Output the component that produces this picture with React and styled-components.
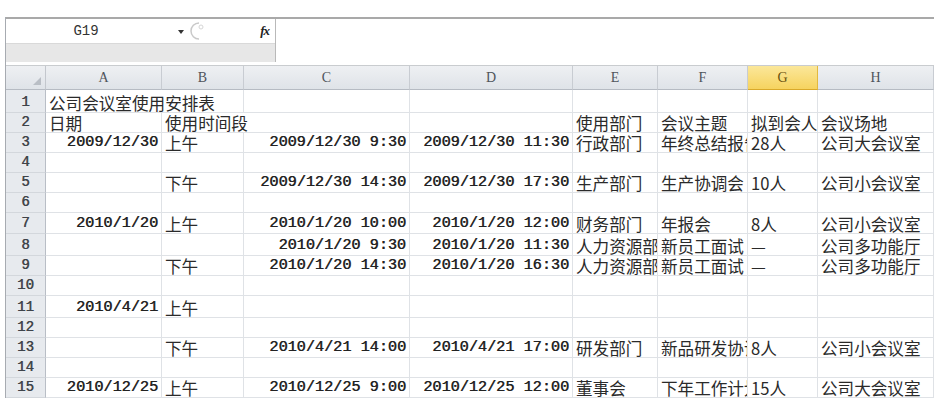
import { Fragment } from "react";
import styled, { createGlobalStyle } from "styled-components";

const GlobalStyle = createGlobalStyle`
  html, body { margin: 0; padding: 0; background: #fff; }
  body { font-family: "Noto Sans CJK SC", sans-serif; }
  * { box-sizing: border-box; }
`;

const COLS = [
  { key: "A", w: 116 },
  { key: "B", w: 82 },
  { key: "C", w: 166 },
  { key: "D", w: 163 },
  { key: "E", w: 85 },
  { key: "F", w: 90 },
  { key: "G", w: 70 },
  { key: "H", w: 116 },
];

const HEIGHTS = [23, 20, 20, 20, 20, 20, 21, 22, 20, 20, 22, 20, 20, 20, 20];

// null = covered by the span of the cell on its left
const ROWS = [
  [{ v: "公司会议室使用安排表", span: 2 }, null, "", "", "", "", "", ""],
  ["日期", { v: "使用时间段", span: 2 }, null, "", "使用部门", "会议主题", "拟到会人", "会议场地"],
  ["2009/12/30", "上午", "2009/12/30 9:30", "2009/12/30 11:30", "行政部门", "年终总结报告", "28人", "公司大会议室"],
  ["", "", "", "", "", "", "", ""],
  ["", "下午", "2009/12/30 14:30", "2009/12/30 17:30", "生产部门", "生产协调会", "10人", "公司小会议室"],
  ["", "", "", "", "", "", "", ""],
  ["2010/1/20", "上午", "2010/1/20 10:00", "2010/1/20 12:00", "财务部门", "年报会", "8人", "公司小会议室"],
  ["", "", "2010/1/20 9:30", "2010/1/20 11:30", "人力资源部", "新员工面试", "—", "公司多功能厅"],
  ["", "下午", "2010/1/20 14:30", "2010/1/20 16:30", "人力资源部", "新员工面试", "—", "公司多功能厅"],
  ["", "", "", "", "", "", "", ""],
  ["2010/4/21", "上午", "", "", "", "", "", ""],
  ["", "", "", "", "", "", "", ""],
  ["", "下午", "2010/4/21 14:00", "2010/4/21 17:00", "研发部门", "新品研发协调会", "8人", "公司小会议室"],
  ["", "", "", "", "", "", "", ""],
  ["2010/12/25", "上午", "2010/12/25 9:00", "2010/12/25 12:00", "董事会", "下年工作计划", "15人", "公司大会议室"],
];

const Frame = styled.div`
  margin: 17px 0 0 5px;
  width: 929px;
  border-left: 1px solid #a7abb1;
`;

const FormulaBar = styled.div`
  display: grid;
  grid-template-columns: 269px 1fr;
  height: 45px;
  border-top: 2px solid #a9a9a9;
  box-shadow: inset 0 1px 0 #dcdcdc;
`;

const NameArea = styled.div`
  display: flex;
  flex-direction: column;
`;

const NameRow = styled.div`
  display: flex;
  align-items: center;
  height: 24px;
  background: #fff;
`;

const NameBox = styled.div`
  width: 160px;
  text-align: center;
  font-family: "Liberation Mono", monospace;
  font-size: 14px;
  color: #333;
`;

const DropArrow = styled.div`
  width: 0;
  height: 0;
  margin: 2px 0 0 12px;
  border-left: 3px solid transparent;
  border-right: 3px solid transparent;
  border-top: 4px solid #333;
`;

const Grip = styled.svg`
  margin-left: 6px;
`;

const Fx = styled.div`
  margin-left: auto;
  margin-right: 6px;
  font-family: "Liberation Serif", serif;
  font-style: italic;
  font-weight: bold;
  font-size: 13px;
  color: #222;
  letter-spacing: -1px;
`;

const Band = styled.div`
  flex: 1;
  background: #e7e7e7;
  border-top: 1px solid #d9d9d9;
`;

const FormulaInput = styled.div`
  background: #fff;
  border-left: 1px solid #b9b9b9;
`;

const Sheet = styled.div`
  display: grid;
  grid-template-columns: 40px ${COLS.map((c) => c.w + "px").join(" ")};
  grid-template-rows: 24px ${HEIGHTS.map((h) => h + "px").join(" ")};
  margin-top: 3px;
  border-top: 1px solid #c9cccf;
`;

const Corner = styled.div`
  background: linear-gradient(#eef0f3, #dfe3e8);
  border-right: 1px solid #c3c7cd;
  border-bottom: 1px solid #b6bbc3;
  display: flex;
  align-items: flex-end;
  justify-content: flex-end;
  padding: 0 4px 4px 0;
`;

const ColHead = styled.div`
  display: flex;
  align-items: center;
  justify-content: center;
  font-family: "Liberation Serif", serif;
  font-size: 14px;
  color: ${(p) => (p.$active ? "#6a5310" : "#4f545b")};
  background: ${(p) =>
    p.$active
      ? "linear-gradient(#fbe79a, #f6d35f)"
      : "linear-gradient(#eef0f3, #dfe3e8)"};
  border-right: 1px solid ${(p) => (p.$active ? "#e2b93f" : "#c8ccd2")};
  border-bottom: 1px solid ${(p) => (p.$active ? "#d9a92a" : "#b6bbc3")};
`;

const RowNum = styled.div`
  display: flex;
  align-items: flex-end;
  justify-content: center;
  padding-bottom: 2px;
  font-family: "Liberation Mono", monospace;
  font-size: 14px;
  color: #3e434a;
  text-shadow: 0.4px 0 0 #555;
  background: #e7eaee;
  border-right: 1px solid #b9bec6;
  border-bottom: 1px solid #d3d7dc;
`;

const Cell = styled.div`
  grid-column: span ${(p) => p.$span};
  display: flex;
  align-items: flex-end;
  justify-content: ${(p) => (p.$mono ? "flex-end" : "flex-start")};
  overflow: hidden;
  white-space: nowrap;
  padding: ${(p) => (p.$mono ? "0 3px 2px 3px" : "0 2px 0 3px")};
  font-family: ${(p) =>
    p.$mono ? '"Liberation Mono", monospace' : '"Noto Sans CJK SC", sans-serif'};
  font-size: ${(p) => (p.$mono ? "15.2px" : "16.6px")};
  line-height: 1;
  color: ${(p) => (p.$mono ? "#222" : "#2a2a2a")};
  text-shadow: ${(p) => (p.$mono ? "0.5px 0 0 #444" : "none")};
  border-right: 1px solid #dfe2e6;
  border-bottom: 1px solid #dfe2e6;
  background: #fff;
`;

const isNumber = (v) => v !== "" && /^[0-9/: ]+$/.test(v);

export default function App() {
  return (
    <>
      <GlobalStyle />
      <Frame>
        <FormulaBar>
          <NameArea>
            <NameRow>
              <NameBox>G19</NameBox>
              <DropArrow />
              <Grip width="16" height="20" viewBox="0 0 16 20">
                <path d="M9 2 A8 8 0 0 0 9 18" fill="none" stroke="#c9c9c9" strokeWidth="1.5" />
                <circle cx="11" cy="6" r="2" fill="none" stroke="#d6d6d6" strokeWidth="1" />
              </Grip>
              <Fx>fx</Fx>
            </NameRow>
            <Band />
          </NameArea>
          <FormulaInput />
        </FormulaBar>
        <Sheet>
          <Corner>
            <svg width="8" height="8" viewBox="0 0 8 8">
              <path d="M8 0 L8 8 L0 8 Z" fill="#b9bec5" />
            </svg>
          </Corner>
          {COLS.map((c) => (
            <ColHead key={c.key} $active={c.key === "G"}>
              {c.key}
            </ColHead>
          ))}
          {ROWS.map((row, i) => (
            <Fragment key={i}>
              <RowNum>{i + 1}</RowNum>
              {row.map((c, j) => {
                if (c === null) return null;
                const v = typeof c === "string" ? c : c.v;
                const span = typeof c === "string" ? 1 : c.span;
                return (
                  <Cell key={j} $span={span} $mono={isNumber(v)}>
                    {v}
                  </Cell>
                );
              })}
            </Fragment>
          ))}
        </Sheet>
      </Frame>
    </>
  );
}
